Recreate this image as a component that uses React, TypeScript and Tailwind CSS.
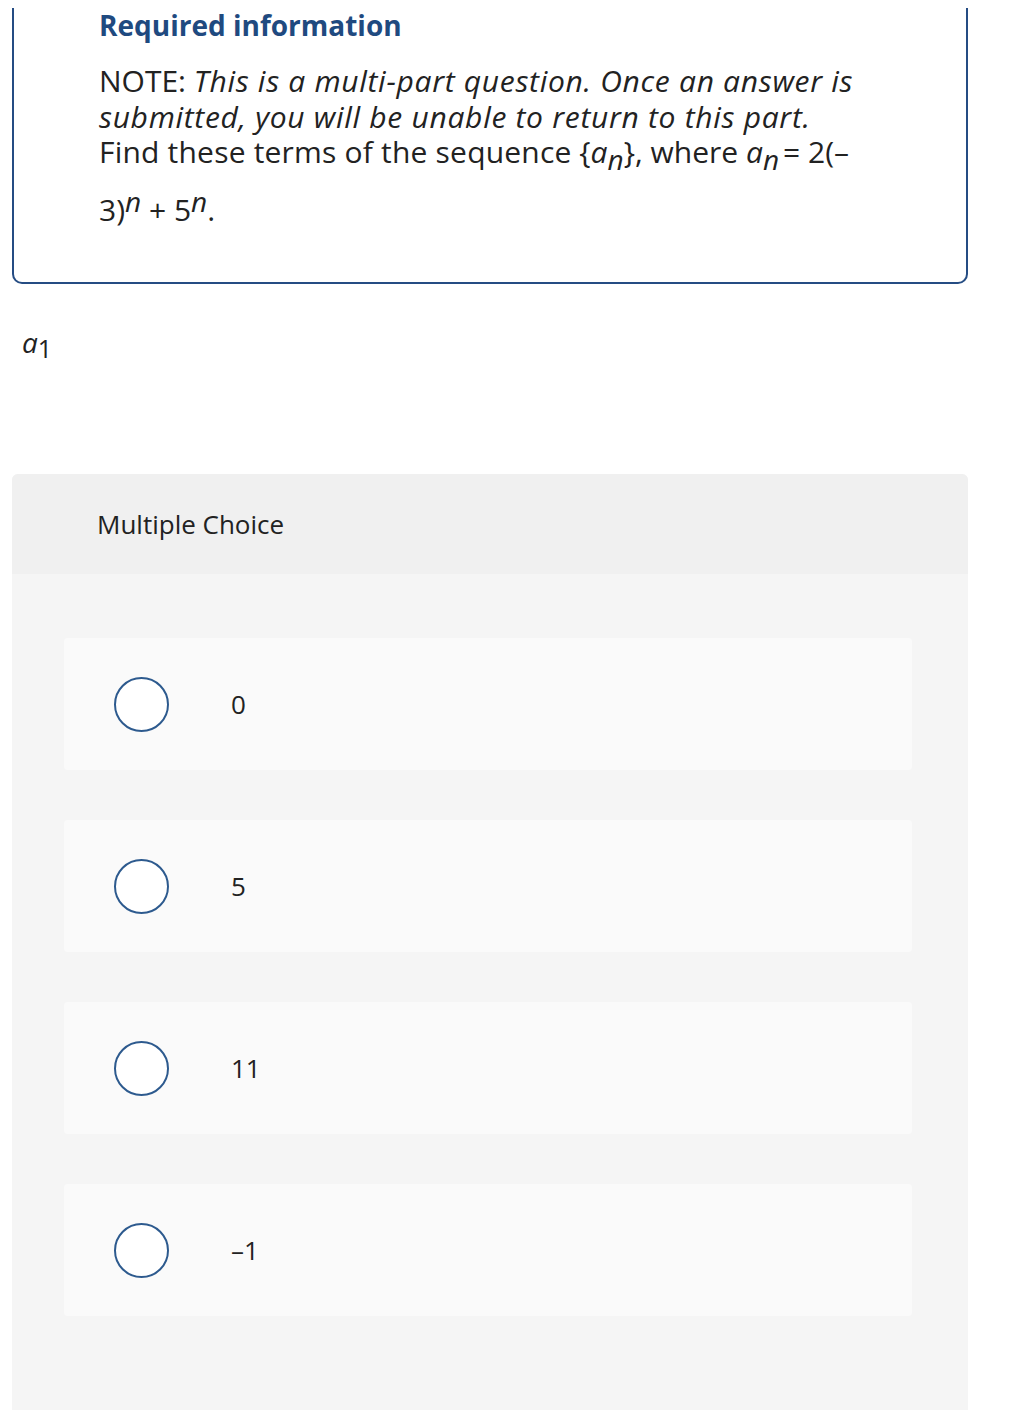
import React from "react";

const font = { fontFamily: "'Open Sans', Lato, sans-serif" };

function Option({ label }: { label: string }) {
  return (
    <div className="flex h-[132px] w-[848px] items-center rounded-[4px] bg-[#fafafa] pl-[50px]">
      <div className="h-[55px] w-[55px] rounded-full border-2 border-[#2d5a8e] bg-white" />
      <div className="ml-[62px] text-[26px] text-[#222]">{label}</div>
    </div>
  );
}

export default function App() {
  return (
    <div className="min-h-[1410px] w-[1012px] bg-white" style={font}>
      <div className="pt-[8px] pl-[12px]">
        <div className="h-[276px] w-[956px] rounded-b-[10px] border-x-2 border-b-2 border-[#254c83] pl-[85px] pr-[10px]">
          <div className="pt-[1px] text-[28px] font-bold leading-[32px] text-[#1f4a80]">Required information</div>
          <div className="mt-[22px] whitespace-nowrap text-[30px] leading-[35.5px] text-[#222]">
            NOTE: <i className="tracking-[0.7px]">This is a multi-part question. Once an answer is</i>
            <br />
            <i className="tracking-[0.7px]">submitted, you will be unable to return to this part.</i>
            <br />
            <span className="tracking-[0.2px]">Find these terms of the sequence</span> {"{"}
            <i>a</i>
            <span className="relative top-[7px] text-[28px] italic leading-none">n</span>
            {"}"}, where <i>a</i>
            <span className="relative top-[7px] text-[28px] italic leading-none">n</span>
            <span className="ml-[4px]">= 2(–</span>
            <br />
            <span className="mt-[22px] inline-block">
              3)<span className="relative top-[-9px] text-[28px] italic leading-none">n</span> + 5
              <span className="relative top-[-9px] text-[28px] italic leading-none">n</span>.
            </span>
          </div>
        </div>
      </div>

      <div className="pl-[22px] pt-[38px] text-[28px] leading-[40px] text-[#222]">
        <i>a</i>
        <span className="relative top-[5px] text-[25px] leading-none">1</span>
      </div>

      <div className="ml-[12px] mt-[112px] w-[956px] overflow-hidden rounded-t-[6px] bg-[#f5f5f5] pb-[100px]">
        <div className="flex h-[100px] items-center bg-[#f0f0f0] pl-[85px] text-[26px] text-[#222]">
          Multiple Choice
        </div>
        <div className="flex flex-col gap-[50px] pl-[52px] pt-[64px]">
          <Option label="0" />
          <Option label="5" />
          <Option label="11" />
          <Option label="–1" />
        </div>
      </div>
    </div>
  );
}
